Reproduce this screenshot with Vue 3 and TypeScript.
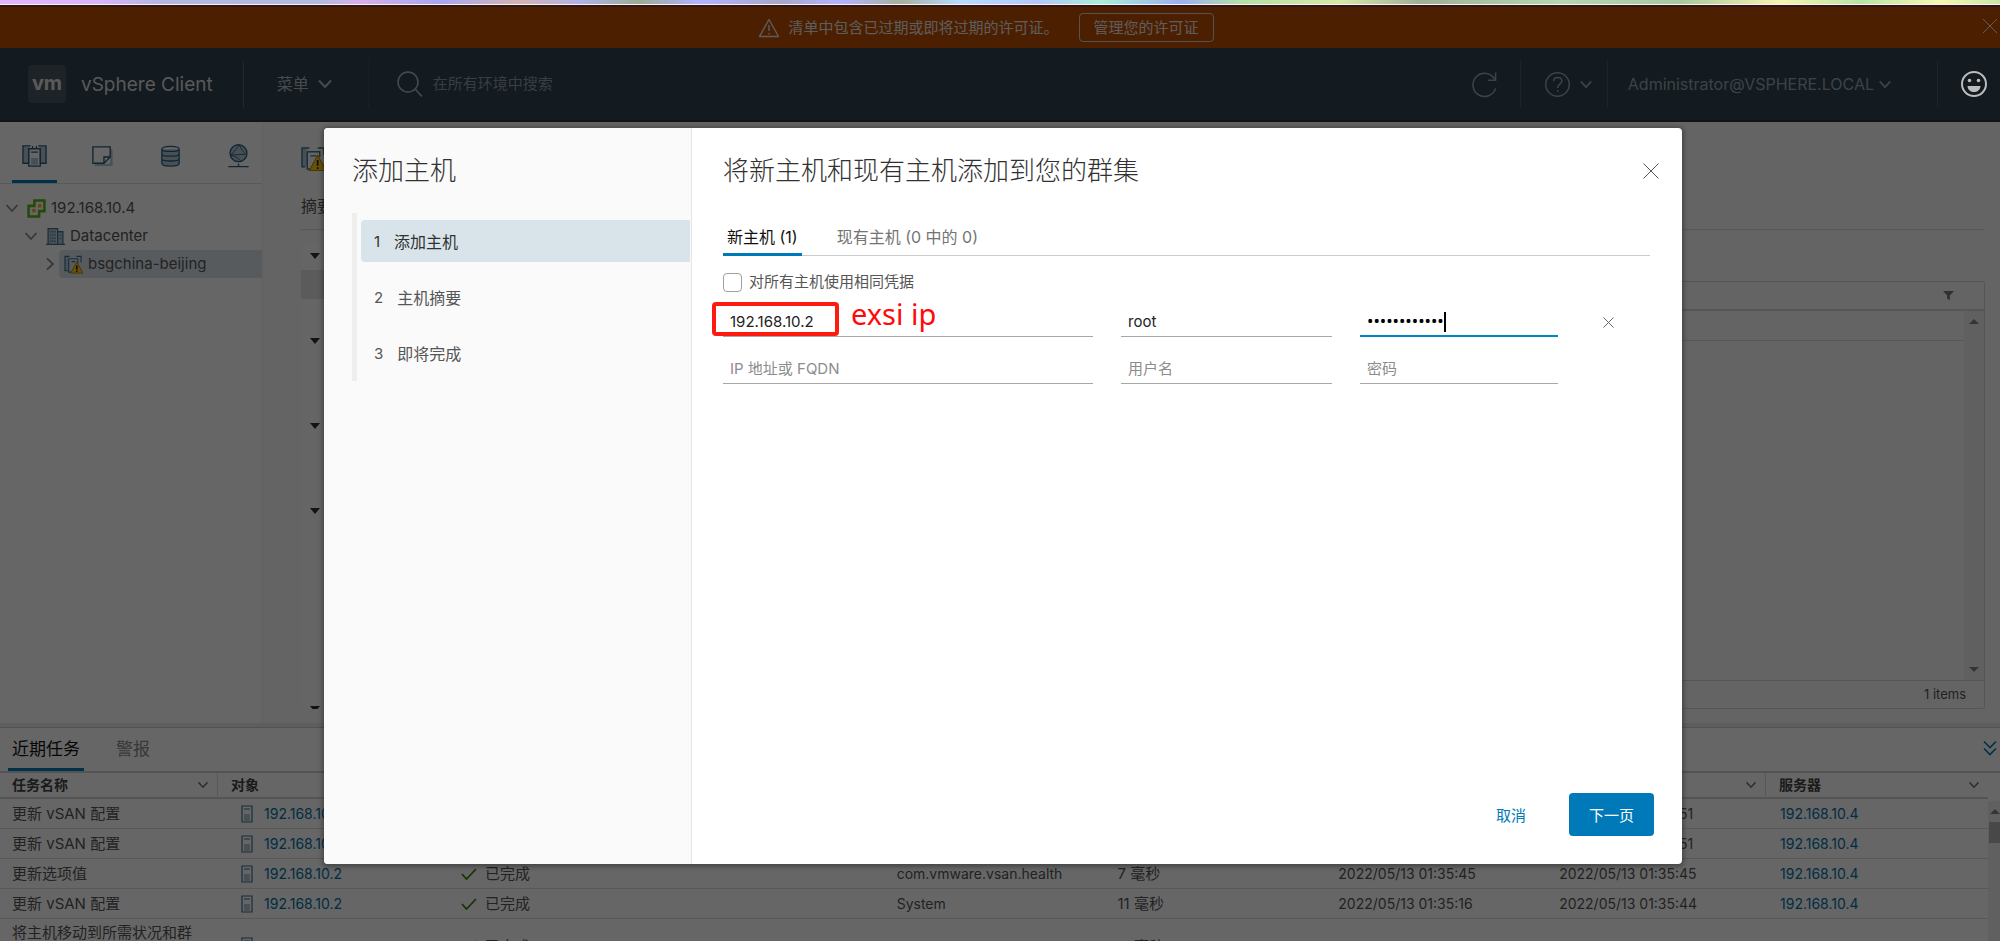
<script setup lang="ts">
import { ref } from 'vue'

interface Task {
  name: string
  object: string
  status: string
  initiator: string
  queued: string
  start: string
  end: string
  server: string
}

const tasks: Task[] = [
  { name: '更新 vSAN 配置', object: '192.168.10.2', status: '', initiator: '', queued: '', start: '', end: '2022/05/13 01:35:51', server: '192.168.10.4' },
  { name: '更新 vSAN 配置', object: '192.168.10.2', status: '', initiator: '', queued: '', start: '', end: '2022/05/13 01:35:51', server: '192.168.10.4' },
  { name: '更新选项值', object: '192.168.10.2', status: '已完成', initiator: 'com.vmware.vsan.health', queued: '7 毫秒', start: '2022/05/13 01:35:45', end: '2022/05/13 01:35:45', server: '192.168.10.4' },
  { name: '更新 vSAN 配置', object: '192.168.10.2', status: '已完成', initiator: 'System', queued: '11 毫秒', start: '2022/05/13 01:35:16', end: '2022/05/13 01:35:44', server: '192.168.10.4' },
  { name: '将主机移动到所需状况和群集', object: '192.168.10.2', status: '已完成', initiator: 'System', queued: '11 毫秒', start: '2022/05/13 01:35:16', end: '2022/05/13 01:35:44', server: '192.168.10.4' }
]

const columns = ['任务名称', '对象', '', '', '', '', '', '', '服务器']
const steps = ['添加主机', '主机摘要', '即将完成']

const activeStep = ref(0)
const sameCredentials = ref(false)
const hostIp = ref('192.168.10.2')
const hostUser = ref('root')
const hostPassword = ref('abcdefghijkl')
</script>

<template>
  <div class="screen">
    <div class="wallpaper"></div>
    <div class="client">
      <div class="banner">
        <div class="banner-body">
          <svg class="warn-line" viewBox="0 0 22 22"><path d="M11 2.5 L20.5 19.5 H1.5 Z M11 8 V14 M11 16 V17.5" /></svg>
          <span>清单中包含已过期或即将过期的许可证。</span>
          <button class="banner-btn">管理您的许可证</button>
        </div>
        <button class="icon-btn banner-close" aria-label="关闭">
          <svg viewBox="0 0 16 16"><path d="M1 1 L15 15 M15 1 L1 15" /></svg>
        </button>
      </div>

      <header class="header">
        <a class="brand" href="#">
          <span class="logo">vm</span>
          <span class="product">vSphere Client</span>
        </a>
        <button class="menu">菜单
          <svg class="chev" viewBox="0 0 16 10"><path d="M2 1.5 L8 8 L14 1.5" /></svg>
        </button>
        <div class="search">
          <svg viewBox="0 0 26 26"><circle cx="11" cy="11" r="10" /><path d="M18.5 18.5 L25 25.5" /></svg>
          <input type="text" placeholder="在所有环境中搜索" aria-label="搜索" />
        </div>
        <button class="head-cell refresh" aria-label="刷新">
          <svg viewBox="0 0 28 28"><path d="M25.5 18 A12 12 0 1 1 24.5 8.5 M25.5 1.5 V9.5 H17.5" /></svg>
        </button>
        <button class="head-cell help" aria-label="帮助">
          <svg class="help-icon" viewBox="0 0 28 28"><circle cx="14" cy="14" r="12.2" /><path d="M10 10.5 C10 5.5 18.5 5.5 18.5 10.5 C18.5 13.5 14.2 13.5 14.2 17.5 M14.2 20 V21.8" /></svg>
          <svg class="chev small" viewBox="0 0 16 10"><path d="M2 1.5 L8 8 L14 1.5" /></svg>
        </button>
        <button class="head-cell user">Administrator@VSPHERE.LOCAL
          <svg class="chev small" viewBox="0 0 16 10"><path d="M2 1.5 L8 8 L14 1.5" /></svg>
        </button>
        <div class="head-cell smile-cell">
          <button class="smile" aria-label="反馈">
            <svg viewBox="0 0 28 28"><circle class="ring" cx="14" cy="14" r="12" /><circle cx="9.5" cy="10.5" r="1.8" /><circle cx="18.5" cy="10.5" r="1.8" /><path d="M7.5 16 H20.5 C20 24 8 24 7.5 16 Z" /></svg>
          </button>
        </div>
      </header>

      <div class="body">
        <aside class="sidebar">
          <nav class="views">
            <button class="view active" aria-label="主机和群集">
              <svg viewBox="0 0 26 24"><path class="fill" d="M1 2 H8 V20 H1 Z M18 2 H25 V20 H18 Z M9.5 14 H16.5 V21 H9.5 Z" /><path d="M7 19.5 H1 V1.5 H9 M19 19.5 H25 V1.5 H17 M7 4.5 H19 V22.5 H7 Z M11 1.5 V4 M15 1.5 V4 M9.5 8 H16.5" /></svg>
            </button>
            <button class="view" aria-label="虚拟机和模板">
              <svg viewBox="0 0 26 24"><path class="fill" d="M5 20 H21 V5 H23.500 V22.500 H5 Z" /><path d="M3 2.500 H21 V13 L14.500 19.500 H3 Z M21 13 H14.500 V19.500" /></svg>
            </button>
            <button class="view" aria-label="存储">
              <svg viewBox="0 0 26 24"><path class="fill" d="M4 5 H22 V20 C20 23 6 23 4 20 Z" /><path d="M4 5 C4 1 22 1 22 5 C22 8 4 8 4 5 V19.500 C4 23.500 22 23.500 22 19.500 V5 M4 9.800 C4 13 22 13 22 9.800 M4 14.800 C4 18 22 18 22 14.800" /></svg>
            </button>
            <button class="view" aria-label="网络">
              <svg viewBox="0 0 26 26"><circle class="fill" cx="13" cy="10" r="9" /><circle cx="13" cy="10" r="9.200" /><path class="thin" d="M14 1 L5 12 L21 11 M14 1 C16 6 18 8 21 11 M5 12 C10 14 14 16 15 18" /><path d="M13 21 V24 M2 24.500 H24" /></svg>
            </button>
          </nav>
          <ul class="tree">
            <li class="root">
              <svg class="twist" viewBox="0 0 14 14"><path d="M1.500 4 L7 10 L12.500 4" /></svg>
              <svg class="node" viewBox="0 0 18 18"><path class="vc" d="M7 1.500 H16.500 V11.500 H11.500 V16.500 H1.500 V6.500 H7 Z" /><path class="vc-dot" d="M10.500 5 H13.500 V8 H10.500 Z M5 9.500 H8 V12.500 H5 Z" /></svg>
              <a href="#">192.168.10.4</a>
            </li>
            <li class="dc">
              <svg class="twist" viewBox="0 0 14 14"><path d="M1.500 4 L7 10 L12.500 4" /></svg>
              <svg class="node" viewBox="0 0 18 18"><path class="fill" d="M2 2 H10 V16 H2 Z M11 5 H16 V16 H11 Z" /><path d="M2 16.500 V1.500 H11 V16.500 M11 4.500 H16 V16.500 M0 16.500 H18" /><path class="windows" d="M4 4.500 H9 M4 7.500 H9 M4 10.500 H9 M4 13.500 H9 M13 8 H15 M13 11 H15" /></svg>
              <a href="#">Datacenter</a>
            </li>
            <li class="cluster">
              <svg class="twist" viewBox="0 0 14 14"><path d="M4 1.500 L10 7 L4 12.500" /></svg>
              <span class="selected">
                <svg class="node" viewBox="0 0 20 20"><path class="fill" d="M1 2 H5 V16 H1 Z" /><path d="M4 16.500 H1 V1.500 H6 M13 1.500 H18 V8 M5 4 H14.500 V9 M5 4 V18 H8 M8 7 H12" /><path class="warn" d="M13.500 7.500 L20 19 H7 Z" /><path class="mark" d="M13.500 11 V15.500 M13.500 16.500 V18" /></svg>
                <a href="#">bsgchina-beijing</a>
              </span>
            </li>
          </ul>
        </aside>

        <main class="main">
          <div class="object-title">
            <svg viewBox="0 0 24 24"><path class="fill" d="M1 2 H6 V19 H1 Z" /><path d="M4 19.500 H1 V1.500 H8 M16 1.500 H22 V8 M6 5 H18 V10 M6 5 V21.500 H9 M9 9 H15" /><path class="warn" d="M16 8.500 L24 23 H8 Z" /><path class="mark" d="M16 13 V18.500 M16 20 V21.500" /></svg>
          </div>
          <div class="object-tabs"><a href="#">摘要</a></div>
          <div class="panes">
            <div class="groups">
              <div v-for="n in 4" :key="n" class="group">
                <span class="caret"></span>
                <span v-if="n === 1" class="group-active"></span>
              </div>
              <div class="group last"><span class="caret"></span></div>
            </div>
            <div class="grid">
              <div class="grid-head">
                <svg viewBox="0 0 12 12"><path d="M0 1 H12 L7.500 6 V11 L4.500 9.500 V6 Z" /></svg>
              </div>
              <div class="grid-body">
                <div class="grid-rows"><div class="grid-row"></div></div>
                <div class="scroll"><span class="arrow up"></span><span class="arrow down"></span></div>
              </div>
              <div class="grid-foot">1 items</div>
            </div>
          </div>
        </main>
      </div>

      <section class="tasks">
        <div class="task-tabs">
          <button class="task-tab active">近期任务</button>
          <button class="task-tab">警报</button>
          <button class="icon-btn collapse" aria-label="折叠">
            <svg viewBox="0 0 14 16"><path d="M1 1.500 L7 7.500 L13 1.500 M1 8.500 L7 14.500 L13 8.500" /></svg>
          </button>
        </div>
        <div class="task-area">
          <div class="task-list">
            <table>
              <colgroup>
                <col class="c-name" /><col class="c-object" /><col /><col /><col /><col /><col /><col /><col class="c-server" />
              </colgroup>
              <thead>
                <tr>
                  <th v-for="(c, i) in columns" :key="i">
                    <span class="th">{{ c }}
                      <svg class="chev tiny" viewBox="0 0 16 10"><path d="M2 1.500 L8 8 L14 1.500" /></svg>
                    </span>
                  </th>
                </tr>
              </thead>
              <tbody>
                <tr v-for="(t, i) in tasks" :key="i">
                  <td>{{ t.name }}</td>
                  <td class="latin">
                    <span class="object">
                      <svg viewBox="0 0 12 18"><path class="fill" d="M3 9 H9 V16 H3 Z" /><path d="M1 1 H11 V17 H1 Z M3 4 H9" /></svg>
                      <a href="#">{{ t.object }}</a>
                    </span>
                  </td>
                  <td>
                    <span v-if="t.status" class="status">
                      <svg viewBox="0 0 16 12"><path d="M1 6 L5.500 11 L15 1" /></svg>{{ t.status }}
                    </span>
                  </td>
                  <td></td>
                  <td class="latin">{{ t.initiator }}</td>
                  <td>{{ t.queued }}</td>
                  <td class="latin">{{ t.start }}</td>
                  <td class="latin">{{ t.end }}</td>
                  <td class="latin"><a href="#">{{ t.server }}</a></td>
                </tr>
              </tbody>
            </table>
          </div>
          <div class="task-scroll"><span class="arrow up"></span><span class="thumb"></span></div>
        </div>
      </section>

      <div class="backdrop">
        <div class="modal" role="dialog" aria-labelledby="wizard-title">
          <div class="wizard-nav">
            <h2>添加主机</h2>
            <ol>
              <li v-for="(s, i) in steps" :key="s">
                <button :class="['step', { active: i === activeStep }]" @click="activeStep = i">
                  <span class="num">{{ i + 1 }}</span>{{ s }}
                </button>
              </li>
            </ol>
          </div>
          <div class="wizard-main">
            <div class="page">
              <div class="page-head">
                <h1 id="wizard-title">将新主机和现有主机添加到您的群集</h1>
                <button class="icon-btn" aria-label="关闭">
                  <svg viewBox="0 0 16 16"><path d="M0.500 0.500 L15.500 15.500 M15.500 0.500 L0.500 15.500" /></svg>
                </button>
              </div>
              <div class="page-tabs">
                <button class="page-tab active">新主机 (1)</button>
                <button class="page-tab">现有主机 (0 中的 0)</button>
              </div>
              <div class="same">
                <input id="same" v-model="sameCredentials" type="checkbox" />
                <label for="same">对所有主机使用相同凭据</label>
              </div>
              <div class="host">
                <div class="field">
                  <input v-model="hostIp" type="text" aria-label="IP 地址或 FQDN" />
                  <span class="mark-box"></span>
                  <span class="mark-note">exsi ip</span>
                </div>
                <div class="field"><input v-model="hostUser" type="text" aria-label="用户名" /></div>
                <div class="field focus">
                  <input v-model="hostPassword" type="password" aria-label="密码" />
                  <span class="text-caret"></span>
                </div>
                <button class="icon-btn remove" aria-label="移除">
                  <svg viewBox="0 0 12 12"><path d="M0.500 0.500 L11.500 11.500 M11.500 0.500 L0.500 11.500" /></svg>
                </button>
              </div>
              <div class="host">
                <div class="field"><input type="text" placeholder="IP 地址或 FQDN" aria-label="IP 地址或 FQDN" /></div>
                <div class="field"><input type="text" placeholder="用户名" aria-label="用户名" /></div>
                <div class="field"><input type="password" placeholder="密码" aria-label="密码" /></div>
              </div>
            </div>
            <div class="wizard-foot">
              <button class="btn-link">取消</button>
              <button class="btn-primary">下一页</button>
            </div>
          </div>
        </div>
      </div>
    </div>
  </div>
</template>

<style>
body {
  margin: 0;
  overflow: hidden;
}
</style>

<style scoped>
* {
  box-sizing: border-box;
}
.screen {
  display: flex;
  flex-direction: column;
  height: 100vh;
  overflow: hidden;
  font-family: Inter, "Noto Sans CJK SC", sans-serif;
  font-size: 15px;
  line-height: 20px;
  color: #565656;
}
button,
input {
  font: inherit;
  color: inherit;
  background: none;
  border: 0;
  padding: 0;
  margin: 0;
}
a {
  color: inherit;
  text-decoration: none;
}
ul,
ol {
  list-style: none;
  margin: 0;
  padding: 0;
}
h1,
h2 {
  margin: 0;
  font-size: 26px;
  line-height: 36px;
  font-weight: 300;
  color: #313131;
}
svg {
  display: block;
  flex: none;
  fill: none;
  stroke: currentColor;
}

.wallpaper {
  flex: 0 0 5px;
  border-bottom: 1px solid #f4f0fa;
  background: linear-gradient(100deg, #e0b8ff 0%, #dab4fb 5%, #b4b8e0 8%, #b2bce0 16%, #d8b0e8 18%, #a8a8f0 22%, #d4b4b4 26%, #b0b4e8 29%, #9cac94 32%, #b4b4ff 35%, #a8a8c8 39%, #b4b4ff 42%, #a8b0a0 45%, #b8dcff 48%, #b4c8f8 52%, #a8f0d8 55%, #9cb0f0 59%, #b4e0a8 62%, #d8e8a8 67%, #a0b098 71%, #b4d8b0 78%, #a8c8a0 84%, #f8f4b0 89%, #b8e4a8 93%, #f8f8b0 97%, #c8e8a8 100%);
}
.client {
  position: relative;
  flex: 1;
  min-height: 0;
  display: flex;
  flex-direction: column;
  background: #fafafa;
}
.icon-btn svg {
  width: 16px;
  height: 16px;
}

.banner {
  flex: 0 0 43px;
  display: flex;
  align-items: center;
  border-top: 2px solid #8c3828;
  background: #bd4e00;
  color: #e8e8e8;
}
.banner-body {
  flex: 1;
  display: flex;
  align-items: center;
  justify-content: center;
}
.warn-line {
  width: 22px;
  height: 22px;
  margin-right: 8px;
  stroke-width: 1.4;
  stroke-linejoin: round;
}
.banner-btn {
  height: 29px;
  margin-left: 20px;
  padding: 0 14px;
  border: 1px solid #d0d0d0;
  border-radius: 4px;
}
.banner-close {
  padding: 0 2px 4px 10px;
}

.header {
  flex: 0 0 74px;
  display: flex;
  align-items: center;
  border-bottom: 2px solid #27333e;
  background: #314351;
  color: #b4bcc2;
}
.brand {
  display: flex;
  align-items: center;
  height: 47px;
  padding: 0 30px 0 28px;
  border-right: 1px solid #56646f;
}
.logo {
  width: 38px;
  height: 38px;
  border-radius: 4px;
  background: #4c5863;
  color: #e0e0e0;
  font-size: 20px;
  line-height: 36px;
  font-weight: 700;
  text-align: center;
}
.product {
  margin-left: 15px;
  padding-top: 2px;
  font-size: 19px;
  line-height: 26px;
  color: #dcdcdc;
}
.menu {
  display: flex;
  align-items: center;
  height: 47px;
  padding: 0 35px 0 33px;
  border-right: 1px solid #40505d;
  font-size: 16px;
}
.chev {
  width: 16px;
  height: 10px;
  margin-left: 8px;
  stroke-width: 2;
}
.chev.small {
  width: 14px;
  height: 9px;
}
.user .chev.small {
  margin-left: 4px;
}
.chev.tiny {
  width: 12px;
  height: 8px;
  color: #777;
}
.search {
  flex: 1;
  display: flex;
  align-items: center;
  padding-left: 28px;
}
.search svg {
  width: 26px;
  height: 26px;
  margin-right: 10px;
  stroke-width: 1.5;
}
.search input {
  flex: 1;
  outline: none;
}
.search input::placeholder {
  color: #8e9ba4;
  opacity: 1;
}
.head-cell {
  display: flex;
  align-items: center;
  height: 47px;
  border-right: 1px solid #4a5965;
  color: #9aa6ae;
}
.refresh {
  padding-right: 22px;
}
.refresh svg,
.help-icon {
  width: 27px;
  height: 27px;
  stroke-width: 1.6;
}
.help {
  padding: 0 14px 0 23px;
}
.user {
  padding: 0 45px 0 20px;
  font-size: 16px;
}
.smile-cell {
  border-right: 0;
  padding: 0 12px 0 22px;
}
.smile {
  position: relative;
  z-index: 3;
  color: #bcbcbc;
}
.smile svg {
  width: 28px;
  height: 28px;
  fill: currentColor;
  stroke: none;
}
.smile .ring {
  fill: none;
  stroke: currentColor;
  stroke-width: 2;
}

.body {
  flex: 1;
  min-height: 0;
  display: flex;
}
.sidebar {
  flex: 0 0 263px;
  border-right: 1px solid #f0f0f0;
  background: #fff;
}
.views {
  display: flex;
  padding: 10px 0 0 12px;
  gap: 23px;
  border-bottom: 1px solid #ddd;
}
.view {
  display: flex;
  align-items: center;
  justify-content: center;
  flex: 0 0 45px;
  height: 51px;
  border-bottom: 3px solid transparent;
  color: #2a5f80;
}
.view svg {
  width: 25px;
  height: 24px;
  stroke-width: 1.4;
}
.view .thin {
  stroke-width: 1;
}
.view.active {
  border-bottom-color: #0079b8;
}
.fill {
  fill: #b4c8d4;
  stroke: none;
}
.tree {
  padding-top: 10px;
}
.tree li {
  display: flex;
  align-items: center;
  height: 28px;
}
.root {
  padding-left: 5px;
}
.dc {
  padding-left: 24px;
}
.cluster {
  padding-left: 43px;
}
.twist {
  width: 14px;
  height: 14px;
  color: #8c8c8c;
  stroke-width: 1.8;
}
.node {
  width: 19px;
  height: 19px;
  margin: 0 5px 0 8px;
  color: #3d7390;
  stroke-width: 1.2;
}
.windows {
  stroke-dasharray: 1 1;
}
.vc {
  stroke: #5eb715;
  stroke-width: 2.4;
}
.vc-dot {
  fill: #f5a623;
  stroke: none;
}
.warn {
  fill: #ffc91a;
  stroke: #b88a00;
  stroke-width: 1;
}
.mark {
  stroke: #222;
  stroke-width: 1.6;
}
.selected {
  flex: 1;
  display: flex;
  align-items: center;
  height: 28px;
  margin-left: 2px;
  border-radius: 4px 0 0 4px;
  background: #d9e4ea;
}
.selected .node {
  margin-left: 5px;
}

.main {
  flex: 1;
  min-width: 0;
  display: flex;
  flex-direction: column;
  padding: 24px 15px 14px 38px;
  background: #f9f9f9;
}
.object-title {
  height: 48px;
  color: #3d7390;
}
.object-title svg {
  width: 25px;
  height: 26px;
  stroke-width: 1.4;
}
.object-tabs {
  height: 36px;
  padding-top: 2px;
  border-bottom: 1px solid #ddd;
  font-size: 16px;
}
.panes {
  flex: 1;
  min-height: 0;
  display: flex;
  gap: 24px;
}
.groups {
  flex: 0 0 300px;
  display: flex;
  flex-direction: column;
  margin-top: 13px;
  overflow: hidden;
  background: #fcfcfc;
}
.group {
  flex: none;
  height: 85px;
}
.group.last {
  margin-top: auto;
  height: 13px;
}
.caret {
  display: block;
  margin: 10px 0 11px 9px;
  width: 0;
  height: 0;
  border: 5px solid transparent;
  border-top: 6px solid #303030;
  border-bottom: 0;
}
.group-active {
  display: block;
  height: 29px;
  background: #e4e4e4;
}
.grid {
  flex: 1;
  display: flex;
  flex-direction: column;
  margin-top: 51px;
  border: 1px solid #d4d4d4;
  border-radius: 3px;
}
.grid-head {
  flex: 0 0 29px;
  display: flex;
  align-items: center;
  justify-content: flex-end;
  padding-right: 30px;
  border-bottom: 2px solid #d8d8d8;
}
.grid-head svg {
  width: 11px;
  height: 11px;
  fill: #7c7c7c;
  stroke: none;
}
.grid-body {
  flex: 1;
  display: flex;
}
.grid-rows {
  flex: 1;
}
.grid-row {
  height: 30px;
  border-bottom: 1px solid #ddd;
}
.scroll {
  flex: 0 0 20px;
  display: flex;
  flex-direction: column;
  justify-content: space-between;
  align-items: center;
  padding: 8px 0;
  background: #f0f0f0;
}
.arrow {
  width: 0;
  height: 0;
  border: 5px solid transparent;
}
.arrow.up {
  border-top: 0;
  border-bottom-color: #858585;
}
.arrow.down {
  border-bottom: 0;
  border-top-color: #858585;
}
.grid-foot {
  flex: 0 0 28px;
  padding-right: 18px;
  border-top: 1px solid #d4d4d4;
  font-size: 13px;
  line-height: 26px;
  text-align: right;
}

.tasks {
  flex: 0 0 218px;
  display: flex;
  flex-direction: column;
  border-top: 4px solid #ececec;
  background: #fff;
  overflow: hidden;
}
.task-tabs {
  flex: 0 0 44px;
  display: flex;
  padding-left: 8px;
  border-top: 1px solid #ccc;
  border-bottom: 2px solid #d0d0d0;
}
.task-tab {
  height: 43px;
  margin-right: 28px;
  padding: 2px 4px 0;
  border-bottom: 3px solid transparent;
  font-size: 17px;
  color: #8c8c8c;
}
.task-tab.active {
  border-bottom-color: #0079b8;
  color: #111;
}
.collapse {
  margin-left: auto;
  padding: 0 3px 4px 0;
  color: #0079b8;
}
.collapse svg {
  width: 14px;
  height: 16px;
  stroke-width: 1.6;
}
.task-area {
  flex: 1;
  min-height: 0;
  display: flex;
}
.task-list {
  flex: 1;
  min-width: 0;
}
table {
  width: 100%;
  table-layout: fixed;
  border-spacing: 0;
}
.c-name {
  width: 218px;
}
.c-object {
  width: 223px;
}
.c-server {
  width: 222px;
}
th {
  height: 26px;
  padding: 0 8px 0 13px;
  border-right: 1px solid #ddd;
  border-bottom: 2px solid #d4d4d4;
  font-size: 14px;
  line-height: 20px;
  font-weight: 700;
  text-align: left;
}
th:first-child {
  padding-left: 12px;
}
th:last-child {
  border-right: 0;
}
.th {
  display: flex;
  align-items: center;
  justify-content: space-between;
  color: #444;
}
.th .chev {
  margin-left: auto;
}
td {
  height: 30px;
  padding: 0 10px 0 14px;
  border-bottom: 1px solid #ddd;
  line-height: 27px;
  white-space: nowrap;
}
td:first-child {
  padding: 0 14px 0 12px;
  white-space: normal;
}
td.latin {
  font-size: 14px;
}
td a {
  color: #0072a8;
}
.object,
.status {
  display: flex;
  align-items: center;
}
.object svg {
  width: 12px;
  height: 18px;
  margin: 0 11px 0 9px;
  color: #3d7390;
  stroke-width: 1.2;
}
.status svg {
  width: 16px;
  height: 12px;
  margin: 0 8px 0 6px;
  color: #3c8500;
  stroke-width: 1.8;
}
.task-scroll {
  flex: 0 0 12px;
  display: flex;
  flex-direction: column;
  align-items: flex-end;
  margin-top: 28px;
  padding-top: 8px;
  background: #f0f0f0;
}
.thumb {
  width: 11px;
  height: 21px;
  margin-top: 8px;
  background: #b4b4b4;
}

.backdrop {
  position: absolute;
  inset: 0;
  z-index: 2;
  display: flex;
  padding: 123px 318px 77px 324px;
  background: rgba(0, 0, 0, 0.6);
}
.modal {
  flex: 1;
  display: flex;
  border-radius: 4px;
  overflow: hidden;
  background: #fff;
  box-shadow: 0 1px 4px 2px rgba(0, 0, 0, 0.3);
}
.wizard-nav {
  flex: 0 0 368px;
  padding: 25px 1px 0 28px;
  border-right: 1px solid #e6e6e6;
  background: #fafafa;
}
.wizard-nav ol {
  display: flex;
  flex-direction: column;
  gap: 14px;
  margin-top: 24px;
  padding: 7px 0 7px 4px;
  border-left: 5px solid #eee;
}
.step {
  display: flex;
  align-items: center;
  gap: 14px;
  width: 100%;
  height: 42px;
  padding: 1px 0 0 13px;
  border-radius: 4px 0 0 4px;
  font-size: 16px;
}
.step.active {
  background: #d9e4ea;
  color: #313131;
}
.num {
  font-size: 15px;
}
.wizard-main {
  flex: 1;
  min-width: 0;
  display: flex;
  flex-direction: column;
}
.page {
  flex: 1;
  padding: 25px 32px 0 31px;
}
.page-head {
  display: flex;
  align-items: center;
  justify-content: space-between;
  margin-bottom: 29px;
}
.page-head .icon-btn {
  margin-right: -9px;
}
.page-tabs {
  display: flex;
  gap: 31px;
  height: 38px;
  border-bottom: 1px solid #ccc;
}
.page-tab {
  height: 38px;
  padding: 2px 4px 0;
  border-bottom: 3px solid transparent;
  font-size: 16px;
  color: #747474;
}
.page-tab.active {
  border-bottom-color: #0079b8;
  color: #111;
}
.same {
  display: flex;
  align-items: center;
  height: 20px;
  margin-top: 16px;
}
.same input {
  appearance: none;
  width: 19px;
  height: 19px;
  margin-right: 7px;
  border: 1px solid #a0a0a0;
  border-radius: 4px;
}
.host {
  display: grid;
  grid-template-columns: 370fr 211fr 198fr 64fr;
  column-gap: 28px;
  margin-top: 14px;
}
.host + .host {
  margin-top: 16px;
}
.field {
  position: relative;
  min-width: 0;
}
.field input {
  display: block;
  width: 100%;
  height: 31px;
  padding: 0 7px;
  border-bottom: 1px solid #a8a8a8;
  color: #222;
  outline: none;
}
.field input::placeholder {
  color: #8c8c8c;
  opacity: 1;
}
.field.focus input {
  border-bottom: 2px solid #0086c8;
  font-family: "Noto Sans", sans-serif;
  font-size: 17px;
  color: #000;
}
.text-caret {
  position: absolute;
  left: 84px;
  top: 6px;
  width: 2px;
  height: 20px;
  background: #000;
}
.mark-box {
  position: absolute;
  left: -11px;
  top: -4px;
  width: 127px;
  height: 34px;
  border: 4px solid #ff1a10;
  border-radius: 4px;
}
.mark-note {
  position: absolute;
  left: 128px;
  top: -10px;
  font-family: "Noto Sans", sans-serif;
  font-size: 29px;
  line-height: 36px;
  color: #ff0a0a;
}
.remove {
  display: flex;
  align-items: center;
  justify-content: center;
  width: 44px;
  padding-top: 2px;
}
.remove svg {
  width: 11px;
  height: 11px;
}
.wizard-foot {
  display: flex;
  justify-content: flex-end;
  gap: 28px;
  padding: 0 28px 28px;
}
.btn-link {
  padding: 2px 15px 0;
  color: #0079b8;
}
.btn-primary {
  height: 43px;
  padding: 2px 20px 0;
  border-radius: 4px;
  background: #0079b8;
  color: #fff;
}
</style>
